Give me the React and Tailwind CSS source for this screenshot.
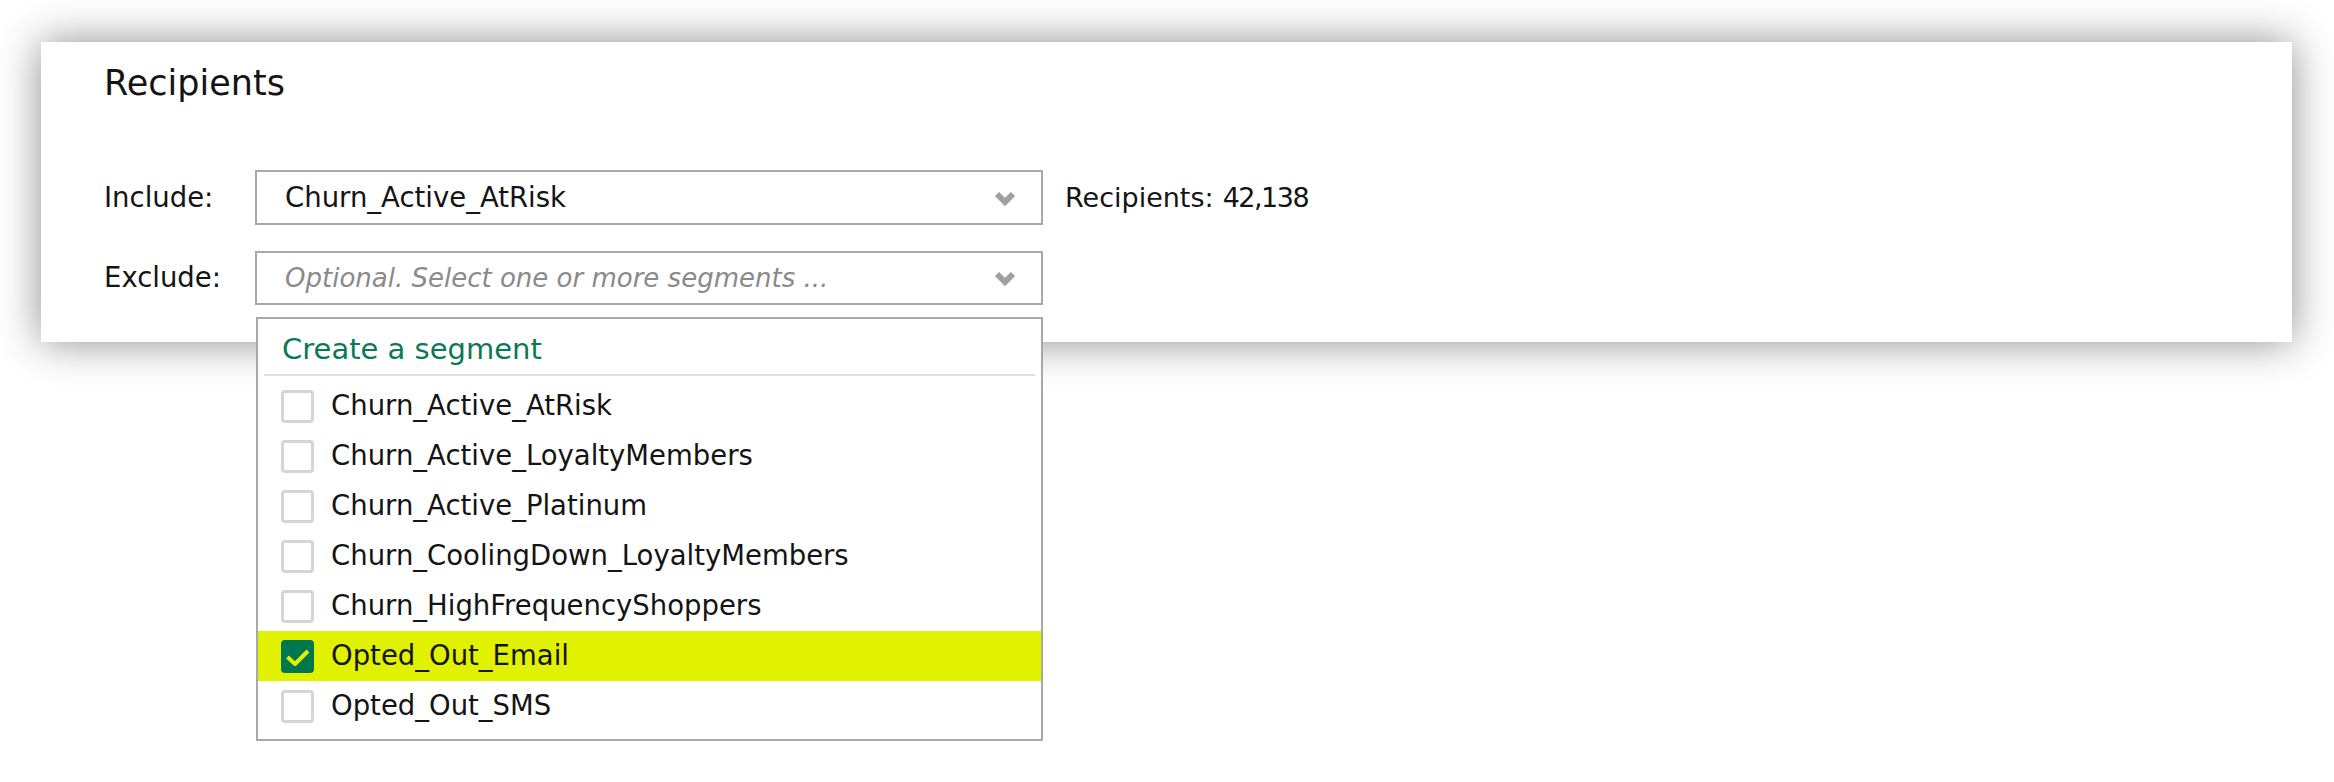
import React from "react";

const items = [
  { label: "Churn_Active_AtRisk", checked: false },
  { label: "Churn_Active_LoyaltyMembers", checked: false },
  { label: "Churn_Active_Platinum", checked: false },
  { label: "Churn_CoolingDown_LoyaltyMembers", checked: false },
  { label: "Churn_HighFrequencyShoppers", checked: false },
  { label: "Opted_Out_Email", checked: true },
  { label: "Opted_Out_SMS", checked: false },
];

function Chevron() {
  return (
    <svg width="22" height="16" viewBox="0 0 22 16" className="shrink-0">
      <polyline
        points="3,4 11,12 19,4"
        fill="none"
        stroke="#a0a0a0"
        strokeWidth="6"
        strokeLinejoin="miter"
      />
    </svg>
  );
}

function Checkbox({ checked }) {
  if (checked) {
    return (
      <div className="w-[33px] h-[33px] rounded-[4px] bg-[#00774f] flex items-center justify-center shrink-0">
        <svg width="33" height="33" viewBox="0 0 33 33">
          <polyline
            points="6.5,17 14,24 27,11"
            fill="none"
            stroke="#e2f200"
            strokeWidth="4"
            strokeLinejoin="round"
          />
        </svg>
      </div>
    );
  }
  return (
    <div className="w-[33px] h-[33px] rounded-[4px] border-[3px] border-[#d5d5d5] bg-white shrink-0" />
  );
}

export default function App() {
  return (
    <div
      className="min-h-screen bg-white pt-[42px] pl-[41px] pr-[42px] text-[#141414]"
      style={{ fontFamily: '"DejaVu Sans", sans-serif' }}
    >
      <div className="relative bg-white h-[300px] pl-[63px] pt-[24px] shadow-[0_0_40px_rgba(0,0,0,0.45)]">
        <h1 className="text-[35px] leading-none font-normal">Recipients</h1>

        <div className="mt-[69px] flex flex-col gap-[26px]">
          <div className="flex items-center">
            <div className="w-[151px] text-[27.5px] leading-none">Include:</div>
            <div className="w-[788px] h-[55px] border-2 border-[#a8a8a8] flex items-center justify-between pl-[28px] pr-[25px]">
              <span className="text-[27.5px] leading-none">Churn_Active_AtRisk</span>
              <Chevron />
            </div>
            <div className="ml-[22px] flex items-center text-[27px] leading-none">
              <span>Recipients:</span>
              <span className="ml-[9px] tracking-[-1.5px]">42,138</span>
            </div>
          </div>

          <div className="flex items-center">
            <div className="w-[151px] text-[27.5px] leading-none">Exclude:</div>
            <div className="relative w-[788px] h-[54px] border-2 border-[#a8a8a8] flex items-center justify-between pl-[28px] pr-[25px]">
              <span className="text-[26px] leading-none italic text-[#8a8a8a]">
                Optional. Select one or more segments ...
              </span>
              <Chevron />

              <div className="absolute z-10 -left-[1px] top-[calc(100%+14px)] w-[787px] bg-white border-2 border-[#a8a8a8] pt-[16px] pb-[8px]">
                <div className="pl-[24px] text-[29px] leading-none text-[#087a55]">
                  Create a segment
                </div>
                <div className="mt-[10px] mx-[6px] h-[2px] bg-[#e0e0e0]" />
                <div className="mt-[5px] flex flex-col">
                  {items.map((it) => (
                    <div
                      key={it.label}
                      className={
                        "h-[50px] flex items-center pl-[23px] gap-[17px] " +
                        (it.checked ? "bg-[#e1f200]" : "bg-white")
                      }
                    >
                      <Checkbox checked={it.checked} />
                      <span className="text-[27.5px] leading-none text-[#141414]">
                        {it.label}
                      </span>
                    </div>
                  ))}
                </div>
              </div>
            </div>
          </div>
        </div>
      </div>
    </div>
  );
}
